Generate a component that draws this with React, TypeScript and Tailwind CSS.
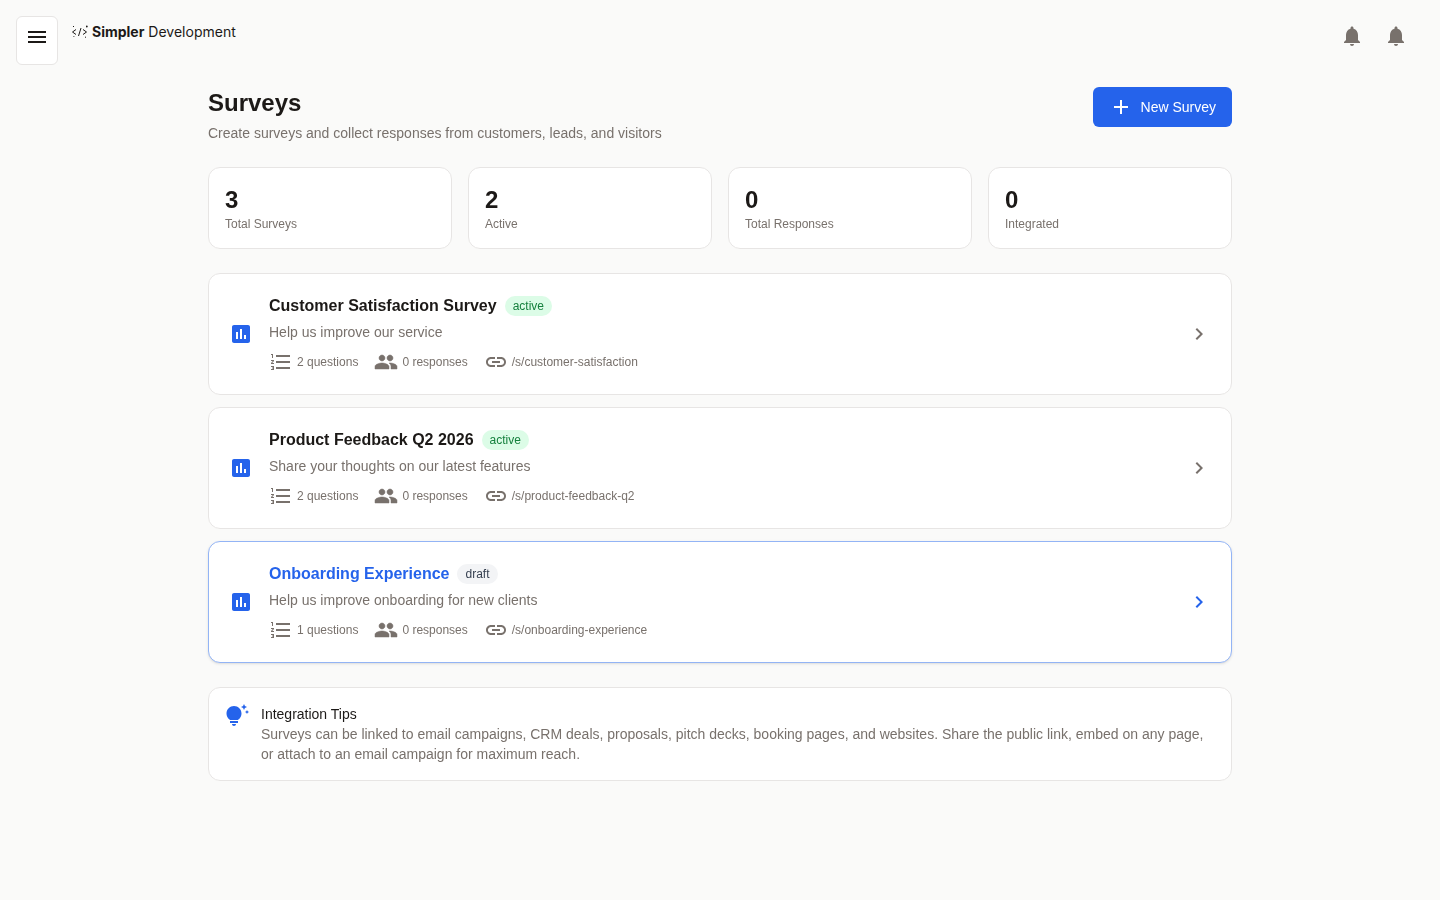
import React from "react";
import { MdAdd, MdChevronRight, MdFormatListNumbered, MdLink, MdMenu, MdNotifications, MdPoll, MdTipsAndUpdates } from "react-icons/md";

const stats = [
  ["3", "Total Surveys"],
  ["2", "Active"],
  ["0", "Total Responses"],
  ["0", "Integrated"],
];

const surveys = [
  { title: "Customer Satisfaction Survey", status: "active", desc: "Help us improve our service", q: "2 questions", path: "/s/customer-satisfaction", hover: false },
  { title: "Product Feedback Q2 2026", status: "active", desc: "Share your thoughts on our latest features", q: "2 questions", path: "/s/product-feedback-q2", hover: false },
  { title: "Onboarding Experience", status: "draft", desc: "Help us improve onboarding for new clients", q: "1 questions", path: "/s/onboarding-experience", hover: true },
];

function Logo() {
  return (
    <svg width="18" height="14" viewBox="0 0 18 14" fill="none" stroke="#1c1917" strokeWidth="1" className="shrink-0">
      <path d="M5 4.5 1.5 7 5 9.5" />
      <path d="M7.5 11 10 3" />
      <path d="M12 4.5 15.5 7 12 9.5" />
      <path d="M2 1.5h1M15 1.5h1.5M15.8.5v2M14 12.2h1M2.5 11.5h.8" />
    </svg>
  );
}

function People() {
  return (
    <svg width="24" height="24" viewBox="0 0 24 24" fill="currentColor" stroke="currentColor" strokeWidth="0.5" className="shrink-0">
      <path d="M16 11c1.66 0 2.99-1.34 2.99-3S17.66 5 16 5c-1.66 0-3 1.34-3 3s1.34 3 3 3zm-8 0c1.66 0 2.99-1.34 2.99-3S9.66 5 8 5C6.34 5 5 6.34 5 8s1.34 3 3 3zm0 2c-2.33 0-7 1.17-7 3.5V19h14v-2.5c0-2.33-4.67-3.5-7-3.5zm8 0c-.29 0-.62.02-.97.05 1.16.84 1.97 1.97 1.97 3.45V19h6v-2.5c0-2.33-4.67-3.5-7-3.5z" />
    </svg>
  );
}

export default function App() {
  return (
    <div className="min-h-[900px] bg-[#fafaf9] font-['Liberation_Sans',sans-serif] text-[#1c1917] antialiased [text-rendering:optimizeLegibility]">
      <header className="flex h-[65px] items-start justify-between pl-4 pr-[32px] pt-4">
        <div className="flex items-start">
          <button className="flex h-[49px] w-[42px] items-center justify-center rounded-md border border-[#e7e5e4] bg-white pb-2">
            <MdMenu size={24} color="#1c1917" />
          </button>
          <div className="ml-[13px] flex h-8 items-center gap-[3px] font-['Inter',sans-serif] text-sm">
            <Logo />
            <span><span className="font-bold">Simpler</span> Development</span>
          </div>
        </div>
        <div className="flex h-10 items-center gap-5">
          <MdNotifications size={24} color="#78716c" />
          <MdNotifications size={24} color="#78716c" />
        </div>
      </header>
      <main className="mx-auto w-[1024px] pt-[22px] [will-change:transform]">
        <div className="flex items-start justify-between">
          <div>
            <h1 className="text-2xl leading-8 font-bold">Surveys</h1>
            <p className="mt-1 text-sm leading-5 text-[#78716c]">Create surveys and collect responses from customers, leads, and visitors</p>
          </div>
          <button className="flex h-10 items-center gap-2 rounded-md bg-[#2563eb] px-4 text-sm text-white">
            <MdAdd size={24} />
            New Survey
          </button>
        </div>
        <div className="mt-6 grid grid-cols-4 gap-4">
          {stats.map(([n, l]) => (
            <div key={l} className="h-[82px] rounded-xl border border-[#e7e5e4] bg-white px-4 pt-[18px]">
              <div className="text-2xl leading-7 font-bold">{n}</div>
              <div className="mt-[2px] text-xs leading-4 text-[#78716c]">{l}</div>
            </div>
          ))}
        </div>
        <div className="mt-6 flex flex-col gap-3">
          {surveys.map((s) => (
            <div key={s.title} className={`flex h-[122px] items-center rounded-xl border bg-white px-5 ${s.hover ? "border-[#93b4f5] shadow-sm" : "border-[#e7e5e4]"}`}>
              <MdPoll size={24} color="#2563eb" className="shrink-0" />
              <div className="ml-4 flex-1">
                <div className="flex items-center gap-2">
                  <span className={`text-base leading-6 font-bold ${s.hover ? "text-[#2563eb]" : ""}`}>{s.title}</span>
                  <span className={`rounded-full px-2 py-[2px] text-xs leading-4 ${s.status === "active" ? "bg-[#dcfce7] text-[#15803d]" : "bg-[#f3f4f6] text-[#374151]"}`}>{s.status}</span>
                </div>
                <p className="mt-1 text-sm leading-5 text-[#78716c]">{s.desc}</p>
                <div className="mt-2 flex items-center gap-4 text-xs text-[#78716c]">
                  <span className="flex items-center gap-1"><MdFormatListNumbered size={24} />{s.q}</span>
                  <span className="flex items-center gap-1"><People />0 responses</span>
                  <span className="flex items-center gap-1"><MdLink size={24} />{s.path}</span>
                </div>
              </div>
              <MdChevronRight size={24} color={s.hover ? "#2563eb" : "#78716c"} className="shrink-0" />
            </div>
          ))}
        </div>
        <div className="mt-6 flex h-[94px] gap-3 rounded-xl border border-[#e7e5e4] bg-white px-4 pt-4">
          <MdTipsAndUpdates size={24} color="#2563eb" className="shrink-0" />
          <div className="text-sm leading-5">
            <div>Integration Tips</div>
            <p className="text-[#78716c]">Surveys can be linked to email campaigns, CRM deals, proposals, pitch decks, booking pages, and websites. Share the public link, embed on any page, or attach to an email campaign for maximum reach.</p>
          </div>
        </div>
      </main>
    </div>
  );
}
